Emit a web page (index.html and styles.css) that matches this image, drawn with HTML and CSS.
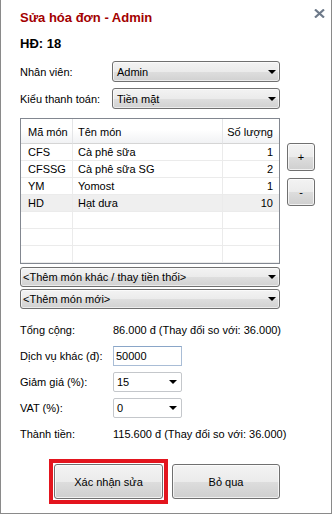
FILE: index.html
```html
<!DOCTYPE html>
<html lang="vi">
  <head>
    <meta charset="UTF-8" />
    <meta name="viewport" content="width=device-width, initial-scale=1.0" />
    <title>Sửa hóa đơn - Admin</title>
    <link rel="stylesheet" href="styles.css">
  </head>
  <body>
    <div class="dialog">
      <div class="dialog-head">
        <h1 class="dialog-title">Sửa hóa đơn - Admin</h1>
        <svg class="close-icon" viewBox="0 0 11 9" width="11" height="9">
          <path d="M1 0.5 L10 8.5 M10 0.5 L1 8.5" stroke="#6e7a8a" stroke-width="2.2" fill="none" />
        </svg>
      </div>

      <div class="invoice-no">HĐ: 18</div>

      <div class="form-row first">
        <span class="label label-top">Nhân viên:</span>
        <div class="combo combo-wide"><span>Admin</span><i class="arrow"></i></div>
      </div>
      <div class="form-row second">
        <span class="label label-top">Kiểu thanh toán:</span>
        <div class="combo combo-wide"><span>Tiền mặt</span><i class="arrow"></i></div>
      </div>

      <div class="items">
        <table class="grid">
          <thead>
            <tr>
              <th class="col-code">Mã món</th>
              <th class="col-name">Tên món</th>
              <th class="col-qty">Số lượng</th>
            </tr>
          </thead>
          <tbody>
            <tr><td>CFS</td><td class="name">Cà phê sữa</td><td class="qty">1</td></tr>
            <tr><td>CFSSG</td><td class="name">Cà phê sữa SG</td><td class="qty">2</td></tr>
            <tr><td>YM</td><td class="name">Yomost</td><td class="qty">1</td></tr>
            <tr class="selected"><td>HD</td><td class="name">Hạt dưa</td><td class="qty">10</td></tr>
            <tr><td></td><td class="name"></td><td class="qty"></td></tr>
            <tr><td></td><td class="name"></td><td class="qty"></td></tr>
            <tr><td></td><td class="name"></td><td class="qty"></td></tr>
          </tbody>
        </table>
        <div class="qty-buttons">
          <button class="btn qty-btn">+</button>
          <button class="btn qty-btn">-</button>
        </div>
      </div>

      <div class="combo combo-full extra"><span>&lt;Thêm món khác / thay tiền thối&gt;</span><i class="arrow"></i></div>
      <div class="combo combo-full new-item"><span>&lt;Thêm món mới&gt;</span><i class="arrow"></i></div>

      <div class="summary">
        <div class="form-row">
          <span class="label">Tổng cộng:</span>
          <span>86.000 đ (Thay đổi so với: 36.000)</span>
        </div>
        <div class="form-row">
          <span class="label">Dịch vụ khác (đ):</span>
          <input class="textbox" type="text" value="50000" />
        </div>
        <div class="form-row">
          <span class="label">Giảm giá (%):</span>
          <div class="combo combo-flat"><span>15</span><i class="arrow"></i></div>
        </div>
        <div class="form-row">
          <span class="label">VAT (%):</span>
          <div class="combo combo-flat"><span>0</span><i class="arrow"></i></div>
        </div>
        <div class="form-row">
          <span class="label">Thành tiền:</span>
          <span>115.600 đ (Thay đổi so với: 36.000)</span>
        </div>
      </div>

      <div class="actions">
        <div class="highlight">
          <button class="btn action-btn confirm">Xác nhận sửa</button>
        </div>
        <button class="btn action-btn cancel">Bỏ qua</button>
      </div>
    </div>
  </body>
</html>
```

FILE: styles.css
```css
* {
  margin: 0;
  padding: 0;
  box-sizing: border-box;
}

body {
  font-family: "Liberation Sans", Arial, sans-serif;
  font-size: 11px;
  color: #000;
  background: #fff;
}

.dialog {
  width: 332px;
  height: 514px;
  border: 1px solid #8a8a8a;
  border-top: none;
  padding-left: 19px;
}

.dialog-head {
  display: flex;
  justify-content: space-between;
  align-items: flex-start;
  padding-top: 9px;
  padding-right: 6px;
}

.dialog-title {
  font-size: 13px;
  font-weight: bold;
  line-height: 16px;
  color: #a30000;
  margin-top: 1px;
}

.invoice-no {
  font-size: 13px;
  font-weight: bold;
  line-height: 16px;
  margin-top: 10px;
}

.form-row {
  display: flex;
  align-items: center;
  height: 20px;
}

.form-row.first {
  margin-top: 9px;
  height: 21px;
}

.form-row.second {
  margin-top: 6px;
  height: 21px;
}

.label {
  width: 93px;
  flex: none;
}

.label-top {
  width: 92px;
}

/* combo boxes */
.combo {
  display: flex;
  align-items: center;
  justify-content: space-between;
  border: 1px solid #707070;
  border-radius: 3px;
  background: linear-gradient(#f3f3f3, #ebebeb 50%, #dedede 51%, #d1d1d1);
  box-shadow: inset 0 0 0 1px rgba(255, 255, 255, 0.6);
  padding: 0 3px 0 4px;
}

.combo-wide {
  width: 168px;
  height: 21px;
}

.combo-full {
  width: 260px;
  height: 20px;
  padding-left: 2px;
}

.combo-full.extra {
  margin-top: 3px;
}

.combo-full.new-item {
  margin-top: 2px;
}

.combo-flat {
  width: 69px;
  height: 20px;
  background: #fff;
  border-color: #c4c7cb;
  border-radius: 2px;
  box-shadow: none;
  padding: 0 4px 0 3px;
}

.arrow {
  width: 0;
  height: 0;
  border-left: 4px solid transparent;
  border-right: 4px solid transparent;
  border-top: 4px solid #000;
}

/* items grid */
.items {
  display: flex;
  margin-top: 9px;
}

.grid {
  width: 260px;
  table-layout: fixed;
  border: 1px solid #828790;
  border-spacing: 0;
  font-size: 11px;
}

.grid th {
  height: 25px;
  font-weight: normal;
  text-align: left;
  white-space: nowrap;
  padding: 2px 0 0 6px;
  border-bottom: 1px solid #d5d5d5;
  border-right: 1px solid #e4e5e7;
  background: linear-gradient(#ffffff, #ffffff 45%, #f1f2f4);
}

.grid th.col-code {
  width: 52px;
  padding-left: 7px;
}

.grid th.col-name {
  width: 150px;
  padding-left: 5px;
}

.grid th.col-qty {
  width: 56px;
  text-align: right;
  padding: 2px 6px 0 0;
  border-right: none;
}

.grid td {
  height: 17px;
  line-height: 13px;
  padding: 1px 0 0 7px;
  border-bottom: 1px solid #ebebeb;
  border-right: 1px solid #ebebeb;
  white-space: nowrap;
}

.grid td.name {
  padding-left: 5px;
}

.grid td.qty {
  text-align: right;
  padding-right: 6px;
  border-right: none;
}

.grid tr.selected td {
  background: #efefef;
}

.qty-buttons {
  display: flex;
  flex-direction: column;
  gap: 7px;
  margin-left: 7px;
  padding-top: 25px;
}

/* buttons */
.btn {
  font-family: "Liberation Sans", Arial, sans-serif;
  font-size: 11px;
  color: #000;
  border: 1px solid #707070;
  border-radius: 3px;
  background: linear-gradient(#f3f3f3, #ebebeb 50%, #dddddd 51%, #cfcfcf);
  box-shadow: inset 0 0 0 1px rgba(255, 255, 255, 0.7);
  cursor: pointer;
}

.qty-btn {
  width: 28px;
  height: 28px;
}

.textbox {
  width: 69px;
  height: 20px;
  border: 1px solid #a9bdd6;
  border-top-color: #8aa6c8;
  font-family: "Liberation Sans", Arial, sans-serif;
  font-size: 11px;
  padding: 0 2px;
  color: #000;
}

.summary {
  display: flex;
  flex-direction: column;
  gap: 6px;
  margin-top: 11px;
}

.actions {
  display: flex;
  align-items: flex-start;
  gap: 4px;
  margin-top: 15px;
  margin-left: 29px;
}

.highlight {
  display: flex;
  border: 4px solid #e3151e;
  padding: 1px;
}

.action-btn {
  height: 35px;
  width: 109px;
}

.action-btn.cancel {
  width: 108px;
  margin-top: 5px;
}
```
